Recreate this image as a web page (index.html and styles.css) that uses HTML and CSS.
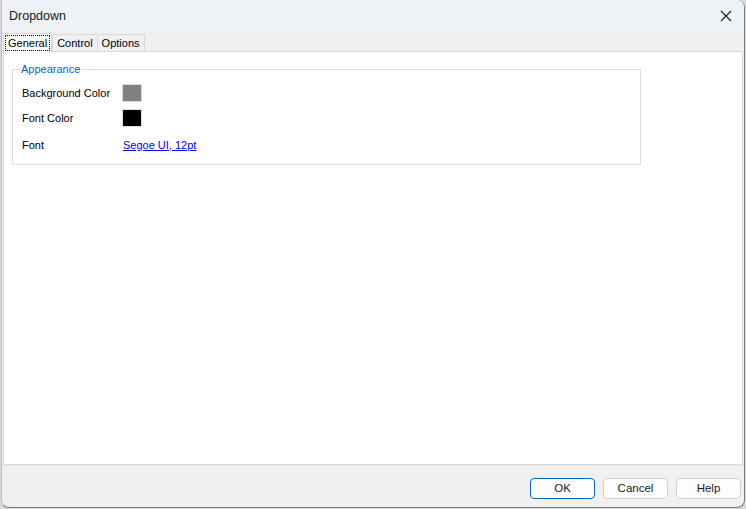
FILE: index.html
```html
<!DOCTYPE html>
<html>
<head>
<meta charset="utf-8">
<link rel="stylesheet" href="styles.css">
</head>
<body>
<div class="window">
  <div class="titlebar">
    <span class="title">Dropdown</span>
    <svg class="close" width="12" height="12" viewBox="0 0 12 12"><path d="M1 1 L11 11 M11 1 L1 11" stroke="#1a1a1a" stroke-width="1.1" fill="none"/></svg>
  </div>
  <div class="tabs">
    <div class="tab active"><span class="focus">General</span></div>
    <div class="tab">Control</div>
    <div class="tab">Options</div>
  </div>
  <div class="page">
    <fieldset class="group">
      <legend>Appearance</legend>
      <div class="row first"><span class="label">Background Color</span><span class="swatch gray"></span></div>
      <div class="row"><span class="label">Font Color</span><span class="swatch black"></span></div>
      <div class="row font-row"><span class="label">Font</span><a class="link" href="#">Segoe UI, 12pt</a></div>
    </fieldset>
  </div>
  <div class="footer">
    <button class="btn primary">OK</button>
    <button class="btn">Cancel</button>
    <button class="btn">Help</button>
  </div>
</div>
</body>
</html>
```

FILE: styles.css
```css
html, body {
  margin: 0;
  padding: 0;
  width: 746px;
  height: 509px;
  overflow: hidden;
  background: #d9d9d9;
  font-family: "Liberation Sans", Arial, sans-serif;
  font-size: 11px;
  color: #000;
}
.window {
  box-sizing: border-box;
  margin-left: 1px;
  width: 744px;
  height: 508px;
  background: #f0f0f0;
  border-right: 1px solid #7a7a7a;
  border-bottom: 1px solid #7a7a7a;
  border-left: 1px solid #bdbdbd;
  border-radius: 0 8px 8px 8px;
  display: flex;
  flex-direction: column;
  overflow: hidden;
}
.titlebar {
  height: 31px;
  background: #eef2f7;
  display: flex;
  align-items: center;
  justify-content: space-between;
  padding: 0 10px 0 7px;
  flex: none;
}
.title {
  font-size: 12.5px;
  color: #1a1a1a;
  margin-top: 1px;
}
.close { margin-right: 2px; }
.tabs {
  display: flex;
  align-items: flex-end;
  height: 20px;
  padding-left: 1px;
  flex: none;
}
.tab {
  height: 16px;
  padding: 0 4px;
  border: 1px solid #d9d9d9;
  border-bottom: none;
  background: #f0f0f0;
  line-height: 16px;
  font-size: 11px;
}
.tab + .tab { margin-left: -1px; }
.tab.active {
  height: 18px;
  background: #fff;
  border-color: #d9d9d9;
  margin-right: 1px;
  padding: 0 1px;
  position: relative;
  z-index: 1;
  margin-bottom: -1px;
}
.focus {
  display: block;
  border: 1px dotted #000;
  padding: 0 2px;
  line-height: 14px;
  margin-top: 1px;
}
.page {
  flex: 1;
  background: #fff;
  border: 1px solid #d9d9d9;
  margin: 0 1px 0 1px;
  padding: 11px 0 0 8px;
}
.group {
  width: 618px;
  height: 100px;
  margin: 0;
  border: 1px solid #dcdcdc;
  padding: 0 0 0 9px;
  box-sizing: content-box;
}
.group legend {
  color: #0066cc;
  padding: 0 2px 0 0;
  margin-left: -1px;
  font-size: 11px;
}
.row {
  display: flex;
  align-items: center;
  height: 25px;
}
.row.first { margin-top: 5px; }
.label {
  width: 100px;
  font-size: 11px;
}
.swatch {
  box-sizing: border-box;
  width: 20px;
  height: 18px;
  border: 1px solid #dcdcdc;
}
.swatch.gray { background: #808080; }
.swatch.black { background: #000; }
.font-row { height: 29px; }
.link {
  color: #0000ff;
  text-decoration: underline;
  font-size: 11px;
  margin-left: 1px;
}
.footer {
  height: 41px;
  flex: none;
  display: flex;
  justify-content: flex-end;
  align-items: center;
  gap: 8px;
  padding-right: 3px;
  border-top: 1px solid #e8e8e8;
}
.btn {
  box-sizing: border-box;
  width: 65px;
  height: 21px;
  background: #fdfdfd;
  border: 1px solid #d0d0d0;
  border-radius: 4px;
  font-family: "Liberation Sans", Arial, sans-serif;
  font-size: 11.5px;
  color: #1a1a1a;
  padding: 0;
  margin-top: 3px;
}
.btn.primary {
  border-color: #0067c0;
}
```
